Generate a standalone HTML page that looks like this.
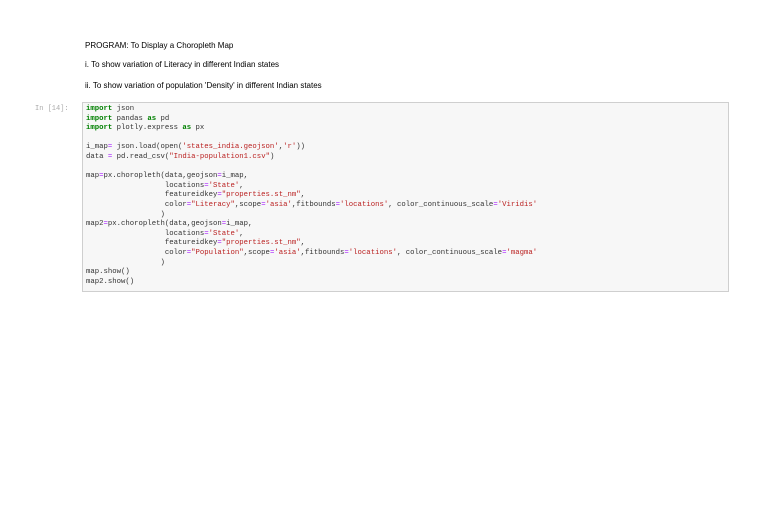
<!DOCTYPE html>
<html><head><style>
body{margin:0;width:768px;height:507px;background:#fff;position:relative;font-family:"Liberation Sans",sans-serif;}
.t{position:absolute;left:85px;font-size:8px;color:#000;}
.p{position:absolute;left:35px;top:105px;font-family:"Liberation Mono",monospace;font-size:7px;color:#aaa;}
.box{position:absolute;left:82px;top:102px;width:645px;height:188px;background:#f7f7f7;border:1px solid #cfcfcf;}
pre{margin:0;position:absolute;left:3px;top:2px;font-family:"Liberation Mono",monospace;font-size:7.3px;line-height:9.6px;color:#333;}
.k{color:#008000;font-weight:bold}.s{color:#ba2121}.o{color:#aa22ff}.b{color:#2a6cd8}
</style></head><body>
<div class="t" style="top:41px">PROGRAM: To Display a Choropleth Map</div>
<div class="t" style="top:60px">i. To show variation of Literacy in different Indian states</div>
<div class="t" style="top:81px">ii. To show variation of population 'Density' in different Indian states</div>
<div class="p">In [14]:</div>
<div class="box"><pre><span class="k">import</span> json
<span class="k">import</span> pandas <span class="k">as</span> pd
<span class="k">import</span> plotly.express <span class="k">as</span> px

i_map<span class="o">=</span> json.load(open(<span class="s">'states_india.geojson'</span>,<span class="s">'r'</span>))
data <span class="o">=</span> pd.read_csv(<span class="s">"India-population1.csv"</span>)

map<span class="o">=</span>px.choropleth(data,geojson<span class="o">=</span>i_map,
                  locations<span class="o">=</span><span class="s">'State'</span>,
                  featureidkey<span class="o">=</span><span class="s">"properties.st_nm"</span>,
                  color<span class="o">=</span><span class="s">"Literacy"</span>,scope<span class="o">=</span><span class="s">'asia'</span>,fitbounds<span class="o">=</span><span class="s">'locations'</span>, color_continuous_scale<span class="o">=</span><span class="s">'Viridis'</span>
                 )
map2<span class="o">=</span>px.choropleth(data,geojson<span class="o">=</span>i_map,
                  locations<span class="o">=</span><span class="s">'State'</span>,
                  featureidkey<span class="o">=</span><span class="s">"properties.st_nm"</span>,
                  color<span class="o">=</span><span class="s">"Population"</span>,scope<span class="o">=</span><span class="s">'asia'</span>,fitbounds<span class="o">=</span><span class="s">'locations'</span>, color_continuous_scale<span class="o">=</span><span class="s">'magma'</span>
                 )
map.show()
map2.show()</pre></div>
</body></html>
